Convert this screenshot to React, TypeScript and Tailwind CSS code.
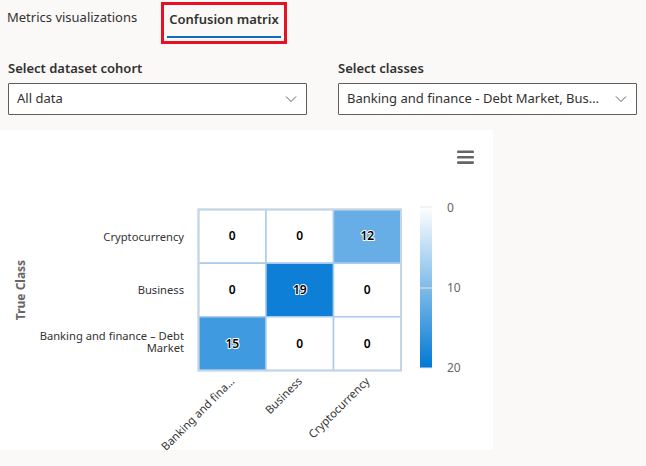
import React from "react";

const FONT = { fontFamily: '"Noto Sans", "Open Sans", sans-serif' };

function Chevron() {
  return (
    <svg width="12" height="8" viewBox="0 0 12 8" className="shrink-0">
      <path d="M1 1.5 L6 6.5 L11 1.5" fill="none" stroke="#605e5c" strokeWidth="1" />
    </svg>
  );
}

function Dropdown({ label, value }: { label: string; value: string }) {
  return (
    <div className="flex flex-col w-[299px]">
      <div className="text-[13px] font-semibold text-[#323130] h-[23px] leading-[17px]">{label}</div>
      <div className="h-[32px] border border-[#605e5c] bg-white flex items-center pl-[8px] pr-[9px] gap-[14px] rounded-[1px]">
        <span className="flex-1 truncate text-[13px] text-[#323130]">{value}</span>
        <Chevron />
      </div>
    </div>
  );
}

const data = [
  [0, 0, 12],
  [0, 19, 0],
  [15, 0, 0],
];

function cellColor(v: number) {
  const t = v / 20;
  const r = Math.round(255 + (0 - 255) * t);
  const g = Math.round(255 + (120 - 255) * t);
  const b = Math.round(255 + (212 - 255) * t);
  return `rgb(${r},${g},${b})`;
}

function Chart() {
  const xs = [198.5, 266, 333.5, 401];
  const ys = [79.5, 133.2, 186.8, 240.5];
  const xLabels = ["Banking and fina...", "Business", "Cryptocurrency"];
  const lf = '"Noto Sans", "Open Sans", sans-serif';
  return (
    <svg width="493" height="320" viewBox="0 0 493 320" className="block">
      <defs>
        <linearGradient id="cb" x1="0" y1="0" x2="0" y2="1">
          <stop offset="0" stopColor="#ffffff" />
          <stop offset="1" stopColor="#0078d4" />
        </linearGradient>
      </defs>
      {/* menu icon */}
      <rect x="457" y="20.5" width="17" height="2.6" rx="1.2" fill="#666" />
      <rect x="457" y="25.9" width="17" height="2.6" rx="1.2" fill="#666" />
      <rect x="457" y="31.3" width="17" height="2.6" rx="1.2" fill="#666" />

      {/* cells */}
      {data.map((row, ri) =>
        row.map((v, ci) => (
          <rect
            key={`${ri}-${ci}`}
            x={xs[ci]}
            y={ys[ri]}
            width={xs[ci + 1] - xs[ci]}
            height={ys[ri + 1] - ys[ri]}
            fill={cellColor(v)}
            stroke="#a9cbee"
            strokeWidth="1.5"
          />
        ))
      )}
      <rect x="198.5" y="79.5" width="202.5" height="161" fill="none" stroke="#c6d5e6" strokeWidth="2" />
      {data.map((row, ri) =>
        row.map((v, ci) => (
          <text
            key={`t${ri}-${ci}`}
            x={(xs[ci] + xs[ci + 1]) / 2}
            y={(ys[ri] + ys[ri + 1]) / 2 + 4}
            textAnchor="middle"
            fontFamily={lf}
            fontSize="12"
            fontWeight="600"
            fill="#000"
            stroke="#fff"
            strokeWidth="2"
            strokeLinejoin="round"
            paintOrder="stroke"
          >
            {v}
          </text>
        ))
      )}

      {/* y labels */}
      <text x="184" y="111" textAnchor="end" fontFamily={lf} fontSize="11.2" fill="#333">Cryptocurrency</text>
      <text x="184" y="164" textAnchor="end" fontFamily={lf} fontSize="11.2" fill="#333">Business</text>
      <text x="184" y="210" textAnchor="end" fontFamily={lf} fontSize="11.2" fill="#333">Banking and finance – Debt</text>
      <text x="184" y="222" textAnchor="end" fontFamily={lf} fontSize="11.2" fill="#333">Market</text>

      <text
        x="0"
        y="0"
        transform="translate(25 160) rotate(-90)"
        textAnchor="middle"
        fontFamily={lf}
        fontSize="12"
        fontWeight="700"
        fill="#666"
      >
        True Class
      </text>

      {/* x labels */}
      {xLabels.map((l, i) => {
        const cx = (xs[i] + xs[i + 1]) / 2 + 3;
        return (
          <text
            key={l}
            x="0"
            y="0"
            transform={`translate(${cx} 252) rotate(-45)`}
            textAnchor="end"
            fontFamily={lf}
            fontSize="11.2"
            fill="#333"
          >
            {l}
          </text>
        );
      })}

      {/* color axis */}
      <rect x="420" y="77" width="12" height="161" fill="url(#cb)" />
      <line x1="420" y1="77" x2="432" y2="77" stroke="#e6e6e6" strokeWidth="1" />
      <line x1="420" y1="158" x2="432" y2="158" stroke="#e6e6e6" strokeWidth="1" />
      <line x1="420" y1="238" x2="432" y2="238" stroke="#e6e6e6" strokeWidth="1" />
      <text x="447" y="82" fontFamily={lf} fontSize="12" fill="#666">0</text>
      <text x="447" y="162" fontFamily={lf} fontSize="12" fill="#666">10</text>
      <text x="447" y="242" fontFamily={lf} fontSize="12" fill="#666">20</text>
    </svg>
  );
}

export default function App() {
  return (
    <div className="w-[646px] h-[466px] bg-[#faf9f8] overflow-hidden text-[#323130]" style={FONT}>
      <div className="flex items-start h-[44px]">
        <div className="pl-[7px] pt-[7px] text-[13px] leading-[20px] w-[161px]">Metrics visualizations</div>
        <div className="mt-[2px] w-[126px] h-[42px] border-[3px] border-[#e81123] flex flex-col items-center">
          <div className="pt-[4px] text-[13px] font-semibold leading-[20px]">Confusion matrix</div>
          <div className="mt-[7px] w-[114px] h-[2px] bg-[#0f6cbd]" />
        </div>
      </div>
      <div className="flex gap-[31px] px-[8px] pt-[16px]">
        <Dropdown label="Select dataset cohort" value="All data" />
        <Dropdown label="Select classes" value="Banking and finance - Debt Market, Business, Cryptocurrency" />
      </div>
      <div className="mt-[15px] w-[493px] h-[320px] bg-white">
        <Chart />
      </div>
    </div>
  );
}
